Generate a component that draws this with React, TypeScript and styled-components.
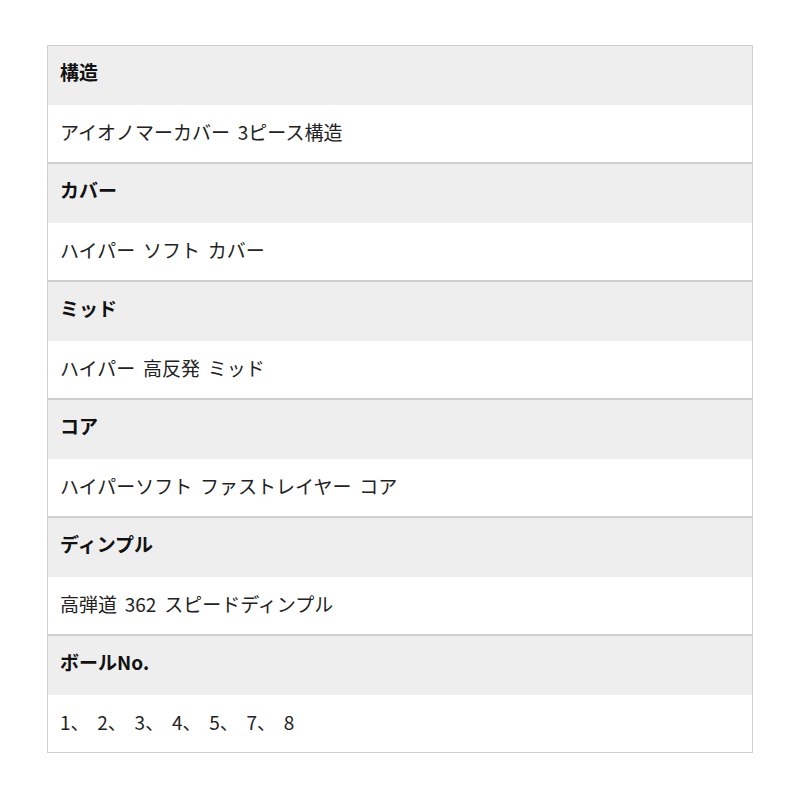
import * as React from "react";
import styled, { createGlobalStyle } from "styled-components";

const GlobalStyle = createGlobalStyle`
  body {
    margin: 0;
    background: #fff;
    font-family: "Noto Sans CJK JP", "Noto Sans", sans-serif;
  }
`;

const Page = styled.div`
  width: 800px;
  height: 800px;
  padding: 45px 47px 0;
  box-sizing: border-box;
`;

const SpecTable = styled.table`
  width: 100%;
  border-collapse: collapse;
  border: 1px solid #cfcfcf;
`;

type HeadCellProps = {
  $first: boolean
}

const HeadCell = styled.th<HeadCellProps>`
  box-sizing: border-box;
  height: ${props => props.$first ? '59px' : '60px'};
  padding: 0 12px 8px;
  background: #eeeeee;
  color: #111;
  font-size: 19px;
  font-weight: 700;
  text-align: left;
  border-top: ${props => props.$first ? '1px' : '2px'} solid #cfcfcf;
`;

const ValueCell = styled.td`
  box-sizing: border-box;
  height: 58px;
  padding: 0 12px 3px;
  background: #fff;
  color: #222;
  font-size: 19px;
  font-weight: 400;
  word-spacing: 3.5px;
`;

const specs = [
  { label: "構造", value: "アイオノマーカバー 3ピース構造" },
  { label: "カバー", value: "ハイパー ソフト カバー" },
  { label: "ミッド", value: "ハイパー 高反発 ミッド" },
  { label: "コア", value: "ハイパーソフト ファストレイヤー コア" },
  { label: "ディンプル", value: "高弾道 362 スピードディンプル" },
  { label: "ボールNo.", value: "1、 2、 3、 4、 5、 7、 8" },
];

const App = () => {
  return (<Page>
    <GlobalStyle />
    <SpecTable>
      <tbody>
        {specs.map((spec, i) => (
          <React.Fragment key={spec.label}>
            <tr><HeadCell $first={i === 0}>{spec.label}</HeadCell></tr>
            <tr><ValueCell>{spec.value}</ValueCell></tr>
          </React.Fragment>
        ))}
      </tbody>
    </SpecTable>
  </Page>);
};

export default App;
